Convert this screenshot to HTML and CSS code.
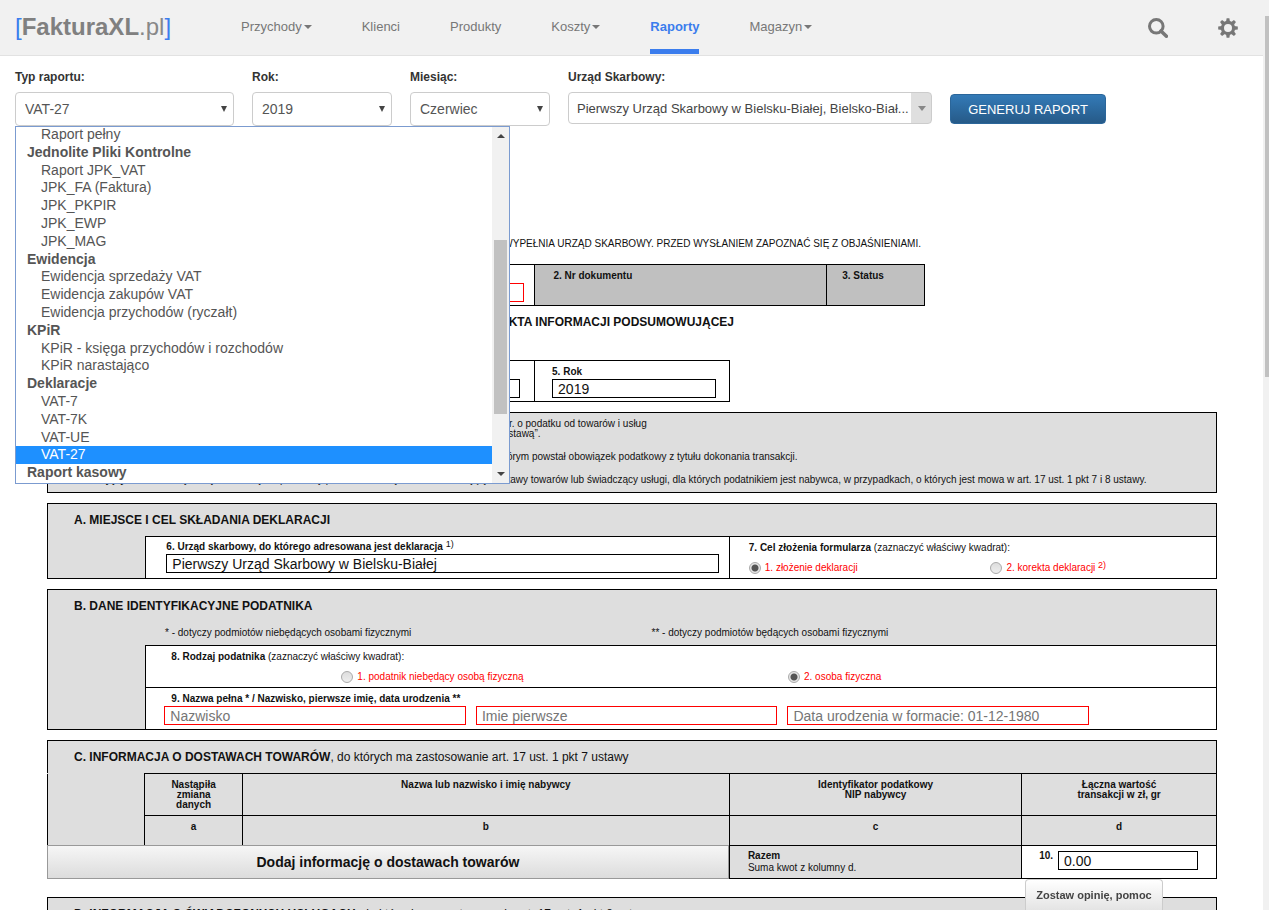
FILE: index.html
```html
<!DOCTYPE html>
<html lang="pl">
<head>
<meta charset="utf-8">
<title>FakturaXL.pl – Raporty</title>
<meta name="viewport" content="width=device-width, initial-scale=1">
<link rel="stylesheet" href="styles.css">
</head>
<body>
<header class="topbar">
  <a class="logo" href="#"><span class="bracket">[</span><b>FakturaXL</b>.pl<span class="bracket">]</span></a>
  <nav class="nav">
    <a class="caret" href="#">Przychody</a>
    <a href="#">Klienci</a>
    <a href="#">Produkty</a>
    <a class="caret" href="#">Koszty</a>
    <a class="active" href="#">Raporty</a>
    <a class="caret" href="#">Magazyn</a>
  </nav>
  <div class="tools">
    <button class="icon-btn" type="button" aria-label="Szukaj">
      <svg viewBox="0 0 20 20" width="20" height="20"><circle cx="8.3" cy="8.3" r="6.8" fill="none" stroke="#777" stroke-width="3"/><path d="M13 13l5.4 5.2" stroke="#777" stroke-width="3.6" stroke-linecap="round"/></svg>
    </button>
    <button class="icon-btn" type="button" aria-label="Ustawienia">
      <svg viewBox="0 0 20 20" width="20" height="20"><g fill="#777"><path fill-rule="evenodd" d="M10 2.8a7.2 7.2 0 1 0 0 14.4a7.2 7.2 0 0 0 0-14.4zM10 6a4 4 0 1 1 0 8a4 4 0 0 1 0-8z"/><path id="tooth" d="M8 4L8.6 .2h2.8L12 4z"/><use href="#tooth" transform="rotate(45 10 10)"/><use href="#tooth" transform="rotate(90 10 10)"/><use href="#tooth" transform="rotate(135 10 10)"/><use href="#tooth" transform="rotate(180 10 10)"/><use href="#tooth" transform="rotate(225 10 10)"/><use href="#tooth" transform="rotate(270 10 10)"/><use href="#tooth" transform="rotate(315 10 10)"/></g></svg>
    </button>
  </div>
</header>

<form class="filters">
  <div class="field field-type">
    <label for="typ">Typ raportu:</label>
    <div class="select-wrap"><select id="typ"><option>VAT-27</option></select></div>
    <div class="dropdown">
      <ul class="options" role="listbox" aria-label="Typ raportu">
        <li>Raport pełny</li>
        <li class="group">Jednolite Pliki Kontrolne</li>
        <li>Raport JPK_VAT</li>
        <li>JPK_FA (Faktura)</li>
        <li>JPK_PKPIR</li>
        <li>JPK_EWP</li>
        <li>JPK_MAG</li>
        <li class="group">Ewidencja</li>
        <li>Ewidencja sprzedaży VAT</li>
        <li>Ewidencja zakupów VAT</li>
        <li>Ewidencja przychodów (ryczałt)</li>
        <li class="group">KPiR</li>
        <li>KPiR - księga przychodów i rozchodów</li>
        <li>KPiR narastająco</li>
        <li class="group">Deklaracje</li>
        <li>VAT-7</li>
        <li>VAT-7K</li>
        <li>VAT-UE</li>
        <li class="selected">VAT-27</li>
        <li class="group">Raport kasowy</li>
      </ul>
      <div class="list-scroll"><i class="up"></i><i class="list-thumb"></i><i class="down"></i></div>
    </div>
  </div>
  <div class="field field-short">
    <label for="rok">Rok:</label>
    <div class="select-wrap"><select id="rok"><option>2019</option></select></div>
  </div>
  <div class="field field-short">
    <label for="miesiac">Miesiąc:</label>
    <div class="select-wrap"><select id="miesiac"><option>Czerwiec</option></select></div>
  </div>
  <div class="field field-office">
    <label for="urzad">Urząd Skarbowy:</label>
    <div class="select-wrap combo"><select id="urzad"><option>Pierwszy Urząd Skarbowy w Bielsku-Białej, Bielsko-Biał...</option></select></div>
  </div>
  <button class="generate" type="button">GENERUJ RAPORT</button>
</form>

<main class="sheet">
  <p class="lead">POLA JASNE WYPEŁNIA PODATNIK, POLA CIEMNE WYPEŁNIA URZĄD SKARBOWY. PRZED WYSŁANIEM ZAPOZNAĆ SIĘ Z OBJAŚNIENIAMI.</p>
  <div class="strip strip-nine">
    <div class="cell"><label for="nip">1. Identyfikator podatkowy NIP</label><input class="box required" id="nip"></div>
    <div class="cell dark"><b>2. Nr dokumentu</b></div>
    <div class="cell dark status"><b>3. Status</b></div>
  </div>
  <h1 class="doc-title">INFORMACJA PODSUMOWUJĄCA / KOREKTA INFORMACJI PODSUMOWUJĄCEJ</h1>
  <div class="strip strip-seven">
    <div class="cell month"><label for="m4">4. Miesiąc</label><input class="box" id="m4" value="06"></div>
    <div class="cell year"><label for="r5">5. Rok</label><input class="box" id="r5" value="2019"></div>
  </div>

  <dl class="panel legal">
    <dt>Podstawa prawna:</dt>
    <dd>Art. 101a ust. 1-3 w związku z art. 17 ust. 1 pkt 7 i 8 ustawy z dnia 11 marca 2004 r. o podatku od towarów i usług<br>(Dz. U. z 2011 r., Nr 177, poz. 1054, wraz z późn. zm.), zwanej w dalszej części „ustawą”.</dd>
    <dt>Termin składania:</dt>
    <dd>Do 25. dnia kolejnego miesiąca kalendarzowego następującego po miesiącu, w którym powstał obowiązek podatkowy z tytułu dokonania transakcji.</dd>
    <dt>Składający:</dt>
    <dd>Podatnicy zarejestrowani jako podatnicy podatku VAT czynni oraz dokonujący dostawy towarów lub świadczący usługi, dla których podatnikiem jest nabywca, w przypadkach, o których jest mowa w art. 17 ust. 1 pkt 7 i 8 ustawy.</dd>
  </dl>

  <section class="panel">
    <h2>A. MIEJSCE I CEL SKŁADANIA DEKLARACJI</h2>
    <div class="row row-a">
      <div class="cell office"><label for="us6">6. Urząd skarbowy, do którego adresowana jest deklaracja <sup>1)</sup></label><input class="box" id="us6" value="Pierwszy Urząd Skarbowy w Bielsku-Białej"></div>
      <div class="cell purpose">
        <p><b>7. Cel złożenia formularza</b> (zaznaczyć właściwy kwadrat):</p>
        <div class="radios">
          <label><input type="radio" name="cel" checked>1. złożenie deklaracji</label>
          <label><input type="radio" name="cel"><span>2. korekta deklaracji <sup>2)</sup></span></label>
        </div>
      </div>
    </div>
  </section>

  <section class="panel">
    <h2>B. DANE IDENTYFIKACYJNE PODATNIKA</h2>
    <div class="notes"><p>* - dotyczy podmiotów niebędących osobami fizycznymi</p><p>** - dotyczy podmiotów będących osobami fizycznymi</p></div>
    <div class="row row-kind">
      <p><b>8. Rodzaj podatnika</b> (zaznaczyć właściwy kwadrat):</p>
      <div class="radios">
        <label><input type="radio" name="rodzaj">1. podatnik niebędący osobą fizyczną</label>
        <label><input type="radio" name="rodzaj" checked>2. osoba fizyczna</label>
      </div>
    </div>
    <div class="row row-name">
      <p><b>9. Nazwa pełna * / Nazwisko, pierwsze imię, data urodzenia **</b></p>
      <div class="names">
        <input class="box required" aria-label="Nazwisko" placeholder="Nazwisko">
        <input class="box required" aria-label="Imie pierwsze" placeholder="Imie pierwsze">
        <input class="box required" aria-label="Data urodzenia" placeholder="Data urodzenia w formacie: 01-12-1980">
      </div>
    </div>
  </section>

  <section class="supplies">
    <h2><b>C. INFORMACJA O DOSTAWACH TOWARÓW</b>, do których ma zastosowanie art. 17 ust. 1 pkt 7 ustawy</h2>
    <table>
      <colgroup><col class="c1"><col class="c1"><col class="c5"><col class="c3"><col class="c2"></colgroup>
      <thead>
        <tr class="heads"><td class="blank" rowspan="2"></td><th>Nastąpiła<br>zmiana<br>danych</th><th>Nazwa lub nazwisko i imię nabywcy</th><th>Identyfikator podatkowy<br>NIP nabywcy</th><th>Łączna wartość<br>transakcji w zł, gr</th></tr>
        <tr class="letters"><th>a</th><th>b</th><th>c</th><th>d</th></tr>
      </thead>
      <tbody>
        <tr>
          <td class="add-cell" colspan="3"><button class="add" type="button">Dodaj informację o dostawach towarów</button></td>
          <td class="sum"><b>Razem</b><br>Suma kwot z kolumny d.</td>
          <td class="amount"><div class="amount-in"><label for="k10">10.</label><input class="box" id="k10" value="0.00"></div></td>
        </tr>
      </tbody>
    </table>
  </section>

  <section class="panel last">
    <h2><b>D. INFORMACJA O ŚWIADCZONYCH USŁUGACH</b>, do których ma zastosowanie art. 17 ust. 1 pkt 8 ustawy</h2>
  </section>
</main>

<button class="feedback" type="button">Zostaw opinię, pomoc</button>
<div class="page-scroll"></div>
</body>
</html>
```

FILE: styles.css
```css
* { box-sizing: border-box; }

body {
  margin: 0;
  height: 100vh;
  overflow: hidden;
  padding-right: 5px;
  background: #fff;
  color: #111;
  font: 10px/10px "Liberation Sans", Arial, sans-serif;
}

p, h1, h2, dl, dd, ul { margin: 0; padding: 0; }
input, select, button { font-family: inherit; margin: 0; }
a { text-decoration: none; color: inherit; }
sup { font-size: 9px; line-height: 0; vertical-align: 3px; font-weight: normal; }

/* Top bar */
.topbar {
  display: flex;
  height: 56px;
  padding: 0 26px 0 15px;
  background: #f1f1f1;
  border-bottom: 1px solid #e2e2e2;
  color: #777;
}
.logo { width: 226px; font-size: 24px; line-height: 54px; color: #888; }
.logo b { color: #808080; }
.bracket { color: #3b7ded; }
.nav { display: flex; gap: 50px; font-size: 13px; line-height: 54px; }
.nav a { height: 54px; white-space: nowrap; }
.caret::after {
  content: "";
  display: inline-block;
  margin-left: 2px;
  vertical-align: 2px;
  border: 4px solid transparent;
  border-top-color: #777;
  border-bottom: 0;
}
.nav .active { color: #3b7ded; font-weight: bold; border-bottom: 5px solid #3b7ded; }
.tools { display: flex; gap: 50px; align-items: center; margin-left: auto; }
.icon-btn { display: flex; padding: 0; border: 0; background: none; }

/* Filters */
.filters { display: flex; align-items: flex-start; gap: 18px; padding: 13px 15px 0; }
.field { position: relative; }
.field > label { display: block; margin-bottom: 7px; font-size: 12px; line-height: 16px; font-weight: bold; color: #333; }
.field-type { width: 219px; }
.field-short { width: 140px; }
.field-office { width: 364px; }
.select-wrap { position: relative; }
.select-wrap select {
  display: block;
  appearance: none;
  width: 100%;
  height: 34px;
  padding: 0 24px 0 9px;
  border: 1px solid #ccc;
  border-radius: 4px;
  background: #fff;
  color: #555;
  font-size: 14px;
}
.select-wrap::after {
  content: "";
  position: absolute;
  right: 7px;
  top: 14px;
  border: 3px solid transparent;
  border-top: 6px solid #444;
  border-bottom: 0;
}
.combo select { height: 32px; padding: 0 21px 0 8px; color: #444; font-size: 13px; background: linear-gradient(#dfdfdf, #dfdfdf) right / 20px 100% no-repeat #fff; }
.combo::after { right: 6px; border-width: 5px 4px 0; border-top-color: #888; }
.generate {
  height: 30px;
  width: 156px;
  margin-top: 25px;
  border: 1px solid #2b669a;
  border-radius: 4px;
  background: linear-gradient(#337ab7, #265a88);
  color: #fff;
  font-size: 13px;
}

/* Open list of report types */
.dropdown {
  position: absolute;
  z-index: 5;
  top: 57px;
  left: 0;
  display: flex;
  width: 495px;
  height: 358px;
  overflow: hidden;
  border: 1px solid #7b9bd0;
  background: #fff;
  color: #555;
}
.options { flex: 1; display: grid; grid-auto-rows: 1fr; height: 356px; margin-top: -1px; list-style: none; font-size: 14px; line-height: 16px; }
.options li { padding-left: 25px; }
.options .group { padding-left: 11px; font-weight: bold; }
.options .selected { background: #1e90ff; color: #fff; }
.list-scroll { display: flex; flex-direction: column; align-items: center; width: 17px; padding: 7px 0; background: #f1f1f1; }
.up, .down { border: 4px solid transparent; }
.up { border-top: 0; border-bottom-color: #444; }
.down { border-bottom: 0; border-top-color: #444; margin-top: auto; }
.list-thumb { width: 13px; height: 174px; margin-top: 102px; background: #c1c1c1; }

/* Declaration sheet */
.sheet { max-width: 1170px; margin: 112px auto 0; }
.lead { width: 874px; text-align: right; white-space: nowrap; line-height: 12px; }
.strip { display: grid; height: 42px; border: 1px solid #000; }
.strip .cell + .cell { border-left: 1px solid #000; }
.strip-nine { width: 75%; grid-template-columns: 5fr 3fr 1fr; margin-top: 14px; }
.strip-seven { width: calc(700% / 12); grid-template-columns: 5fr 2fr; margin-top: 30px; }
.cell { padding: 6px 10px 0 18px; background: #fff; }
.cell.dark { background: #c0c0c0; }
.cell.status { padding-left: 15px; }
.cell label { display: block; font-weight: bold; }
.strip .month { padding-right: 14px; }
.strip .year { padding: 6px 13px 0 17px; }
.doc-title { width: 687px; margin-top: 8px; text-align: right; white-space: nowrap; font-size: 12px; line-height: 16px; }
.box {
  display: block;
  width: 100%;
  min-width: 0;
  height: 19px;
  margin-top: 2px;
  padding: 0 5px;
  border: 1px solid #000;
  border-radius: 0;
  background: #fff;
  color: #111;
  font-size: 14px;
}
.required { border-color: #f00; }
.box::placeholder { color: #757575; opacity: 1; }

.panel { margin-top: 10px; border: 1px solid #000; background: #dedede; }
.panel h2, .supplies h2 { padding: 8px 26px; font-size: 12px; line-height: 16px; }
.supplies h2, .last h2 { font-weight: normal; }
.legal { display: grid; grid-template-columns: 97px 1fr; row-gap: 13px; padding: 6px 0 7px; white-space: nowrap; }
.legal dt { padding-left: 26px; font-weight: bold; }
.row { margin-left: calc(100% / 12); border-top: 1px solid #000; border-left: 1px solid #000; background: #fff; height: 42px; }
.row-a { display: grid; grid-template-columns: 6fr 5fr; }
.row .office { padding: 5px 10px 0 20px; border-right: 1px solid #000; }
.row .purpose { padding: 6px 0 0 19px; }
.radios label { display: flex; align-items: center; gap: 4px; color: #f00; font-weight: normal; }
.purpose .radios { display: grid; grid-template-columns: 1fr 1fr; column-gap: 16px; margin-top: 9px; }
input[type="radio"] {
  appearance: none;
  flex: none;
  width: 12px;
  height: 12px;
  border: 1px solid #aaa;
  border-radius: 50%;
  background: linear-gradient(#ddd, #eee);
}
input[type="radio"]:checked { background: radial-gradient(circle, #555 3px, #e6e6e6 4px); }
.notes { display: grid; grid-template-columns: 1fr 1fr; padding: 6px 78px 7px 117px; }
.row-kind { padding: 6px 26px 0 25px; }
.row-kind .radios { display: grid; grid-template-columns: 10fr 9fr; padding-left: 170px; margin-top: 9px; }
.row-name { padding: 6px 127px 0 18px; }
.row-name p { padding-left: 7px; }
.names { display: grid; grid-template-columns: 1fr 1fr 1fr; gap: 10px; }

.supplies { margin-top: 10px; }
.supplies h2 { border: 1px solid #000; border-bottom: 0; background: #dedede; }
.supplies table { width: 100%; table-layout: fixed; border-collapse: collapse; background: #dedede; border-left: 1px solid #000; }
.supplies td, .supplies th { padding: 0; border: 1px solid #000; vertical-align: top; }
.supplies td.blank { border-top-color: #dedede; }
.c1 { width: calc(100% / 12); }
.c5 { width: calc(500% / 12); }
.c3 { width: 25%; }
.c2 { width: calc(200% / 12); }
.supplies .heads th { height: 42px; padding-top: 6px; }
.supplies .letters th { height: 30px; padding-top: 6px; }
.supplies td.sum { padding: 4px 18px; line-height: 12px; }
.supplies td.amount { background: #fff; padding: 5px 18px 0 17px; }
.amount-in { display: flex; gap: 5px; font-weight: bold; }
.amount-in .box { flex: 1; margin: 0; }
.add {
  position: relative;
  display: block;
  width: calc(100% + 1px);
  height: 34px;
  border: 1px solid #999;
  background: linear-gradient(#f6f6f6, #dcdcdc);
  color: #111;
  font-size: 14px;
  font-weight: bold;
}
.supplies .add { margin: -1px 0 -1px -1px; }
.last { margin-top: 18px; }

/* Over the page */
.feedback {
  position: fixed;
  right: 106px;
  bottom: 0;
  height: 31px;
  width: 138px;
  padding: 0;
  border: 1px solid #ccc;
  border-bottom: 0;
  border-radius: 4px 4px 0 0;
  background: linear-gradient(#fff, #e4e4e4);
  color: #444;
  font-size: 11px;
  font-weight: bold;
}
.page-scroll {
  position: fixed;
  top: 0;
  right: 0;
  bottom: 0;
  width: 6px;
  background: linear-gradient(#c1c1c1, #c1c1c1) 2px 16px / 4px 361px no-repeat #f1f1f1;
}
```
